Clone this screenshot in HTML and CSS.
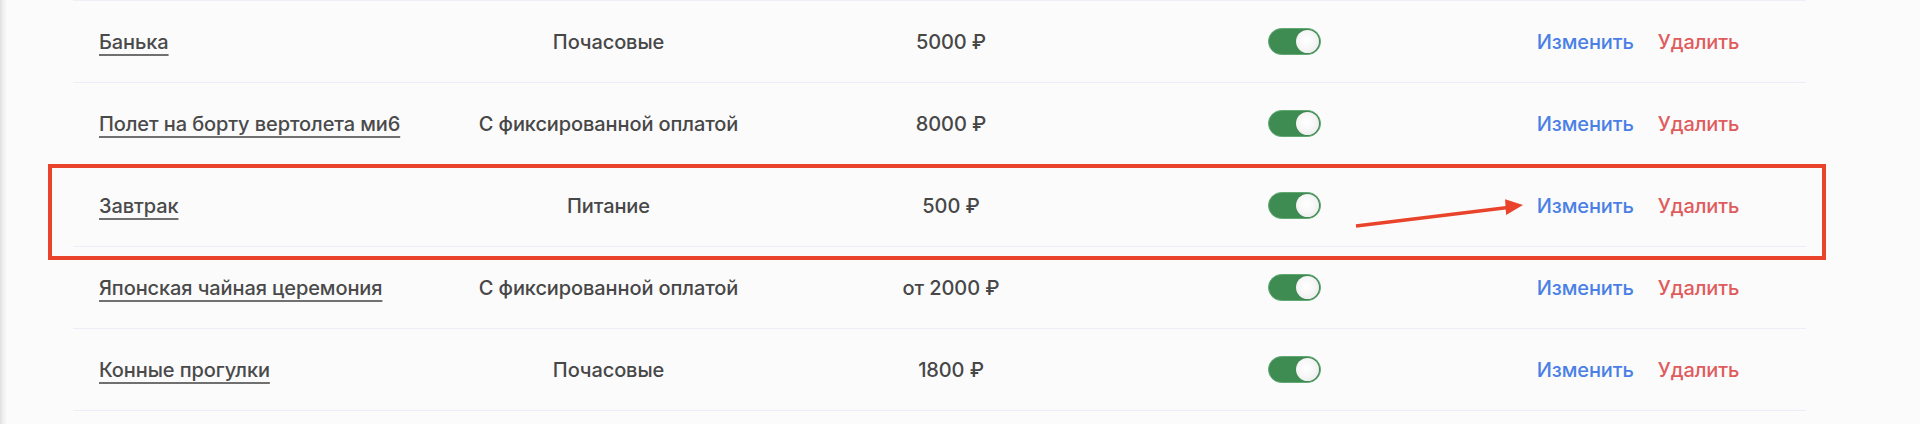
FILE: index.html
```html
<!DOCTYPE html>
<html lang="ru">
<head>
<meta charset="utf-8">
<title>Услуги</title>
<link rel="stylesheet" href="styles.css">
</head>
<body>
<div class="page">
  <div class="table">
    <div class="row">
      <div class="name"><a href="#">Банька</a></div>
      <div class="type">Почасовые</div>
      <div class="price">5000 ₽</div>
      <div class="state"><span class="toggle"><span class="knob"></span></span></div>
      <div class="actions"><a class="edit" href="#">Изменить</a><a class="del" href="#">Удалить</a></div>
    </div>
    <div class="row">
      <div class="name"><a href="#">Полет на борту вертолета ми6</a></div>
      <div class="type">С фиксированной оплатой</div>
      <div class="price">8000 ₽</div>
      <div class="state"><span class="toggle"><span class="knob"></span></span></div>
      <div class="actions"><a class="edit" href="#">Изменить</a><a class="del" href="#">Удалить</a></div>
    </div>
    <div class="row">
      <div class="name"><a href="#">Завтрак</a></div>
      <div class="type">Питание</div>
      <div class="price">500 ₽</div>
      <div class="state"><span class="toggle"><span class="knob"></span></span></div>
      <div class="actions"><a class="edit" href="#">Изменить</a><a class="del" href="#">Удалить</a></div>
    </div>
    <div class="row">
      <div class="name"><a href="#">Японская чайная церемония</a></div>
      <div class="type">С фиксированной оплатой</div>
      <div class="price">от 2000 ₽</div>
      <div class="state"><span class="toggle"><span class="knob"></span></span></div>
      <div class="actions"><a class="edit" href="#">Изменить</a><a class="del" href="#">Удалить</a></div>
    </div>
    <div class="row">
      <div class="name"><a href="#">Конные прогулки</a></div>
      <div class="type">Почасовые</div>
      <div class="price">1800 ₽</div>
      <div class="state"><span class="toggle"><span class="knob"></span></span></div>
      <div class="actions"><a class="edit" href="#">Изменить</a><a class="del" href="#">Удалить</a></div>
    </div>
  </div>
  <div class="highlight"></div>
  <svg class="arrow" width="200" height="40" viewBox="0 0 200 40">
    <line x1="6" y1="31" x2="158" y2="12.5" stroke="#e9432b" stroke-width="3.6" stroke-linecap="butt"/>
    <polygon points="173,10 155.1,4.3 156.1,20.1" fill="#e9432b"/>
  </svg>
</div>
</body>
</html>
```
FILE: styles.css
```css
html, body {
  margin: 0;
  padding: 0;
}
body {
  width: 1920px;
  height: 424px;
  overflow: hidden;
  background: linear-gradient(to right, #e0e0e1 0, #efeff0 3px, #fbfbfc 7px, #fbfbfc 100%);
  font-family: Inter, "Noto Sans", sans-serif;
  color: #474747;
}
.page {
  position: relative;
  height: 424px;
}
.table {
  margin-left: 73px;
  width: 1733px;
  border-top: 1px solid #eef0f8;
}
.row {
  display: grid;
  grid-template-columns: 301px 417px 268px 419px 268px;
  align-items: center;
  height: 81px;
  padding-left: 26px;
  border-bottom: 1px solid #ebeef9;
  font-size: 20px;
  font-weight: 500;
  letter-spacing: -0.1px;
  white-space: nowrap;
}
.name a {
  color: #4a4a4a;
  text-decoration: underline;
  text-decoration-color: #707070;
  text-decoration-thickness: 2px;
  text-underline-offset: 5px;
}
.type, .price {
  text-align: center;
}
.state {
  display: flex;
  justify-content: center;
}
.toggle {
  display: flex;
  justify-content: flex-end;
  align-items: center;
  box-sizing: border-box;
  width: 53px;
  height: 27px;
  padding: 0 1px;
  border-radius: 14px;
  background: #3f8c53;
  border: 1px solid #61a873;
}
.knob {
  width: 23px;
  height: 23px;
  border-radius: 50%;
  background: radial-gradient(circle at 45% 45%, #ffffff 0, #f7f7f7 45%, #e4e4e4 100%);
  box-shadow: 0 0 1px rgba(0,0,0,0.25);
}
.actions {
  display: flex;
  justify-content: center;
  gap: 24px;
}
.actions a {
  text-decoration: none;
}
.edit {
  color: #4a80e6;
}
.del {
  color: #e05c5c;
}
.highlight {
  position: absolute;
  left: 48px;
  top: 164px;
  width: 1778px;
  height: 96px;
  box-sizing: border-box;
  border: 4px solid #e9432b;
}
.arrow {
  position: absolute;
  left: 1350px;
  top: 195px;
}
```
